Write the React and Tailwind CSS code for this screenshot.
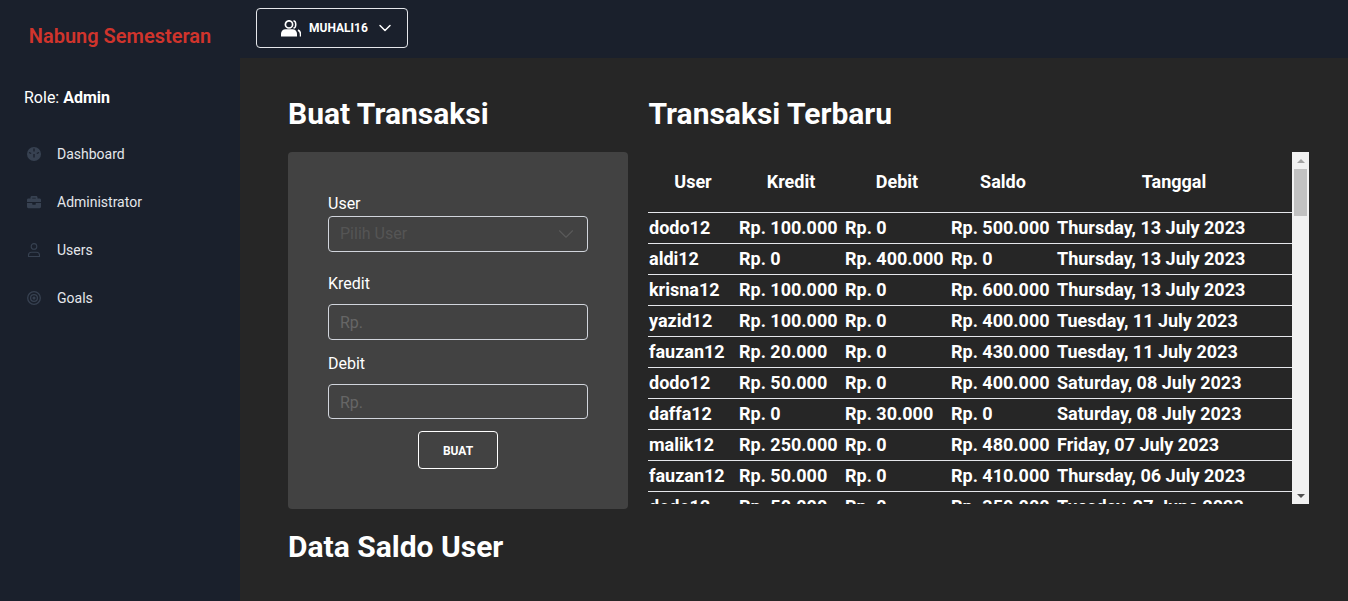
import { FaBriefcase } from 'react-icons/fa';
import { ChevronDown } from 'lucide-react';

const rows = [
  ['dodo12', 'Rp. 100.000', 'Rp. 0', 'Rp. 500.000', 'Thursday, 13 July 2023'],
  ['aldi12', 'Rp. 0', 'Rp. 400.000', 'Rp. 0', 'Thursday, 13 July 2023'],
  ['krisna12', 'Rp. 100.000', 'Rp. 0', 'Rp. 600.000', 'Thursday, 13 July 2023'],
  ['yazid12', 'Rp. 100.000', 'Rp. 0', 'Rp. 400.000', 'Tuesday, 11 July 2023'],
  ['fauzan12', 'Rp. 20.000', 'Rp. 0', 'Rp. 430.000', 'Tuesday, 11 July 2023'],
  ['dodo12', 'Rp. 50.000', 'Rp. 0', 'Rp. 400.000', 'Saturday, 08 July 2023'],
  ['daffa12', 'Rp. 0', 'Rp. 30.000', 'Rp. 0', 'Saturday, 08 July 2023'],
  ['malik12', 'Rp. 250.000', 'Rp. 0', 'Rp. 480.000', 'Friday, 07 July 2023'],
  ['fauzan12', 'Rp. 50.000', 'Rp. 0', 'Rp. 410.000', 'Thursday, 06 July 2023'],
  ['dodo12', 'Rp. 50.000', 'Rp. 0', 'Rp. 350.000', 'Tuesday, 27 June 2023'],
];

function DashIcon() {
  return (
    <svg width="14" height="14" viewBox="0 0 14 14">
      <circle cx="7" cy="7" r="7" fill="#374151" />
      <path d="M7 1.500v3M2 5.500l2.200 1M12 5.500l-2.200 1M7 7v3.500" stroke="#1a202c" strokeWidth="1.300" fill="none" />
    </svg>
  );
}

function UserIcon() {
  return (
    <svg width="14" height="14" viewBox="0 0 14 14" fill="none" stroke="#374151" strokeWidth="1.100">
      <circle cx="7" cy="3.400" r="2.800" />
      <path d="M1.500 13.500v-1.300c0-1.700 1.300-3 3-3h5c1.700 0 3 1.300 3 3v1.300z" />
    </svg>
  );
}

function TargetIcon() {
  return (
    <svg width="14" height="14" viewBox="0 0 14 14" fill="none" stroke="#374151" strokeWidth="1.300">
      <circle cx="7" cy="7" r="6.300" />
      <circle cx="7" cy="7" r="3.400" />
      <circle cx="7" cy="7" r="0.900" fill="#374151" />
    </svg>
  );
}

function TeamIcon() {
  return (
    <svg width="20" height="17" viewBox="0 0 20 17" fill="none">
      <circle cx="8" cy="4.400" r="3.600" stroke="white" strokeWidth="1.700" />
      <path d="M0 16.500v-2.700c0-2.700 2-4.500 4.500-4.500h7c2.500 0 4.500 1.800 4.500 4.500v2.700z" fill="white" />
      <path d="M12.500 0.800c3 .5 3 6.700 0 7.300M17 10c1.700.9 2.500 2.300 2.500 4v2.500" stroke="white" strokeWidth="1.500" />
    </svg>
  );
}

function NavItem({ icon, label }) {
  return (
    <a className="flex items-center h-12 pl-[27px] text-sm text-gray-200">
      <span className="w-[30px] flex items-center">{icon}</span>
      {label}
    </a>
  );
}

function Field({ label, heightClass }) {
  return (
    <div>
      <label className="block mb-2 text-white leading-6">{label}</label>
      <input
        placeholder="Rp."
        className={`block w-full px-[11px] rounded border border-gray-300 bg-transparent placeholder:text-[#666666] outline-none ${heightClass}`}
      />
    </div>
  );
}

export default function App() {
  return (
    <div className="flex h-[601px] overflow-hidden bg-[#262626] font-['Roboto',sans-serif] text-white">
      {/* Sidebar */}
      <aside className="w-[240px] shrink-0 bg-[#1a202c]">
        <div className="h-[72px] flex items-center justify-center text-xl font-semibold text-[#d0342c]">
          Nabung Semesteran
        </div>
        <p className="mt-[14px] pl-6 leading-6">
          Role: <span className="font-bold">Admin</span>
        </p>
        <nav className="mt-[20px]">
          <NavItem icon={<DashIcon />} label="Dashboard" />
          <NavItem icon={<FaBriefcase size={14} color="#374151" />} label="Administrator" />
          <NavItem icon={<UserIcon />} label="Users" />
          <NavItem icon={<TargetIcon />} label="Goals" />
        </nav>
      </aside>

      <div className="flex-1 min-w-0">
        {/* Top bar */}
        <header className="h-[58px] bg-[#1a202c] pt-2 pl-4">
          <button className="flex items-center w-[152px] h-10 pl-[24px] rounded border border-gray-200 text-xs font-bold">
            <TeamIcon />
            <span className="ml-2">MUHALI16</span>
            <ChevronDown size={20} strokeWidth={1.800} className="ml-[7px]" />
          </button>
        </header>

        <main className="pt-[38px] pl-12">
          <div className="flex">
            {/* Form */}
            <section className="w-[340px] shrink-0">
              <h2 className="text-3xl font-bold h-[56px] leading-9">Buat Transaksi</h2>
              <form className="h-[357px] rounded bg-[#424242] px-10 pt-10">
                <label className="block leading-6">User</label>
                <div className="flex items-center justify-between h-9 px-[11px] rounded border border-gray-300">
                  <span className="text-[#555555]">Pilih User</span>
                  <ChevronDown size={26} strokeWidth={1} className="text-[#5a5a5a] -mr-[3px]" />
                </div>
                <div className="mt-5">
                  <Field label="Kredit" heightClass="h-9" />
                </div>
                <div className="mt-[12px]">
                  <Field label="Debit" heightClass="h-[35px] pt-[1px]" />
                </div>
                <button type="button" className="block mx-auto mt-3 w-20 h-[38px] pt-[1px] rounded border border-white text-xs font-bold">
                  BUAT
                </button>
              </form>
            </section>

            {/* Tabel transaksi */}
            <section className="ml-5 w-[661px]">
              <h2 className="text-3xl font-bold h-[56px] leading-9 pl-[0.5px]">Transaksi Terbaru</h2>
              <div className="flex h-[352px]">
                <div className="w-[644px] overflow-hidden">
                  <table className="w-full table-fixed border-collapse text-lg font-bold">
                    <thead>
                      <tr className="h-[60px]">
                        <th className="w-[90px] font-bold">User</th>
                        <th className="w-[106px] font-bold">Kredit</th>
                        <th className="w-[106px] font-bold">Debit</th>
                        <th className="w-[106px] font-bold">Saldo</th>
                        <th className="font-bold">Tanggal</th>
                      </tr>
                    </thead>
                    <tbody>
                      {rows.map((r, i) => (
                        <tr key={i} className="h-[31px] border-t border-gray-200">
                          {r.map((c, j) => (
                            <td key={j} className="px-[1px] whitespace-nowrap leading-[30px]">{c}</td>
                          ))}
                        </tr>
                      ))}
                    </tbody>
                  </table>
                </div>
                {/* Scrollbar */}
                <div className="w-[17px] bg-[#f1f1f1] flex flex-col items-center">
                  <div className="h-[17px] flex items-center justify-center">
                    <div className="w-0 h-0 border-x-[4px] border-x-transparent border-b-[4px] border-b-[#a3a3a3]" />
                  </div>
                  <div className="w-[13px] h-[47px] bg-[#c1c1c1]" />
                  <div className="flex-1" />
                  <div className="h-[17px] flex items-center justify-center">
                    <div className="w-0 h-0 border-x-[4px] border-x-transparent border-t-[4px] border-t-[#505050]" />
                  </div>
                </div>
              </div>
            </section>
          </div>

          <h2 className="mt-5 text-3xl font-bold leading-9">Data Saldo User</h2>
        </main>
      </div>
    </div>
  );
}
